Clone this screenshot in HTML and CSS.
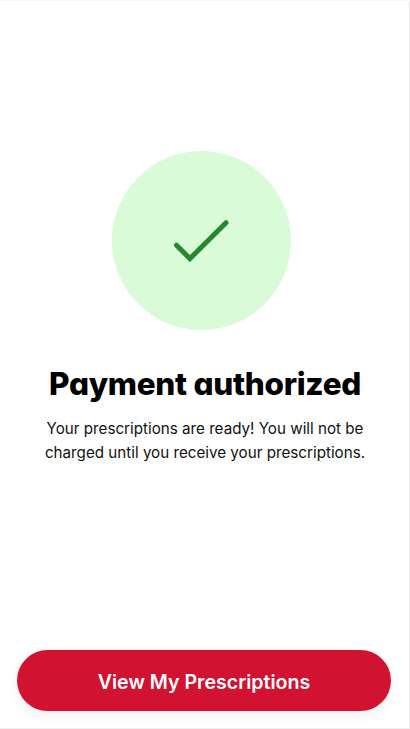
FILE: index.html
```html
<!DOCTYPE html>
<html lang="en">
<head>
<meta charset="utf-8">
<title>Payment authorized</title>
<link rel="stylesheet" href="styles.css">
</head>
<body>
<main class="screen">
  <div class="status">
    <svg class="check" viewBox="0 0 60 46" aria-hidden="true"><path d="M4.5 27.2 17.9 40.6 54 4.7" stroke-linecap="round"/></svg>
  </div>
  <h1 class="title">Payment authorized</h1>
  <p class="message">Your prescriptions are ready! You will not be<br>charged until you receive your prescriptions.</p>
  <button class="action" type="button">View My Prescriptions</button>
</main>
</body>
</html>
```
FILE: styles.css
```css
* { box-sizing: border-box; }
body { margin: 0; background: #fff; font-family: Inter, sans-serif; color: #000; }
.screen {
  height: 729px;
  display: flex;
  flex-direction: column;
  align-items: center;
  padding: 150px 17px 17px;
  border: solid #e8e8e8;
  border-width: 1px 1px 1px 0;
  border-top-color: #f7f7f7;
  border-bottom-color: #f0f0f0;
}
.status {
  width: 179px;
  height: 179px;
  margin-right: 6px;
  flex: none;
  border-radius: 50%;
  background: #d9fbd8;
  display: flex;
  align-items: center;
  justify-content: center;
}
.check { width: 60px; height: 46px; fill: none; stroke: #28882e; stroke-width: 5; }
.title {
  margin: 34px 0 0;
  padding-left: 1px;
  font-size: 31.5px;
  line-height: 40px;
  font-weight: 800;
  font-feature-settings: "cv11";
  letter-spacing: -.3px;
  white-space: nowrap;
}
.message { margin: 13px 0 0; padding-left: 1px; font-size: 15.2px; line-height: 24px; text-align: center; white-space: nowrap; color: #111; }
.action {
  width: 374px;
  height: 61px;
  margin: auto 1px 0 0;
  padding: 3px 0 0;
  border: 0;
  border-radius: 31px;
  background: #d11230;
  color: #fff;
  font: 600 19.6px/24px Inter, sans-serif;
  box-shadow: 0 4px 12px rgba(0, 0, 0, .07);
}
```
